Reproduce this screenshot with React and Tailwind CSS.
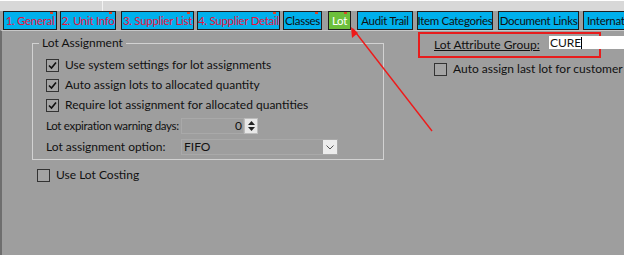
import React from "react";

const font = { fontFamily: 'Lato, "Noto Sans", sans-serif' };

function Tab({ label, cls, active, numbered, marker }) {
  return (
    <div
      className={`relative h-[19px] shrink-0 border border-[#1e1e1e] flex items-center justify-center text-[11.5px] tracking-[-0.3px] leading-none whitespace-nowrap overflow-hidden ${cls} ${
        active
          ? "bg-[#6cbf3c] text-white"
          : numbered
          ? "bg-[#00b0ec] text-[#e8123c]"
          : "bg-[#00b0ec] text-[#111]"
      }`}
    >
      {label}
      {marker && (
        <span className="absolute top-[-1px] right-[3px] w-[3px] h-[3px] bg-[#d9472a]" />
      )}
    </div>
  );
}

function Check({ checked, children, cls = "" }) {
  return (
    <div className={`flex items-center h-[20px] ${cls}`}>
      <span className="w-[13px] h-[13px] shrink-0 border border-[#333] bg-[#a4a4a4] flex items-center justify-center">
        {checked && (
          <svg width="9" height="9" viewBox="0 0 9 9">
            <path d="M1 4.5 L3.5 7 L8 1.5" fill="none" stroke="#111" strokeWidth="1.6" />
          </svg>
        )}
      </span>
      <span className="ml-[6px] text-[12px] text-[#111] whitespace-nowrap">{children}</span>
    </div>
  );
}

export default function App() {
  return (
    <div className="relative w-[624px] h-[255px] bg-[#9e9e9e] overflow-hidden" style={font}>
      {/* top strip */}
      <div className="h-[11px] bg-[#d8d8d8] border-t border-white flex">
        <div className="w-[103px] border-r border-[#f2f2f2]" />
      </div>

      {/* tabs */}
      <div className="flex h-[19px]">
        <Tab label="1. General" cls="ml-[3px] w-[54px]" numbered marker />
        <Tab label="2. Unit Info" cls="ml-[3px] w-[56px]" numbered marker />
        <Tab label="3. Supplier List" cls="ml-[5px] w-[73px]" numbered marker />
        <Tab label="4. Supplier Detail" cls="ml-[3px] w-[83px]" numbered marker />
        <Tab label="Classes" cls="ml-[3px] w-[39px]" marker />
        <Tab label="Lot" cls="ml-[6px] w-[23px]" active marker />
        <Tab label="Audit Trail" cls="ml-[6px] w-[56px]" />
        <Tab label="Item Categories" cls="ml-[4px] w-[76px]" />
        <Tab label="Document Links" cls="ml-[5px] w-[81px]" />
        <Tab label="International" cls="ml-[4px] w-[70px] justify-start pl-[3px]" />
      </div>

      {/* panel */}
      <div className="h-[225px] border-t border-[#c8c8c8] border-l-2 border-l-[#6e6e6e] flex">
        <div className="pl-[30px] pt-[12px] shrink-0">
          <div className="relative w-[352px] h-[117px] border border-[#d2d2d2] pt-[11px] pl-[13px]">
            <span className="absolute top-[-9px] left-[6px] px-[3px] bg-[#9e9e9e] text-[12px] text-[#111] leading-[16px]">
              Lot Assignment
            </span>
            <Check checked>Use system settings for lot assignments</Check>
            <Check checked>Auto assign lots to allocated quantity</Check>
            <Check checked>Require lot assignment for allocated quantities</Check>
            <div className="flex items-center h-[20px] mt-[1px]">
              <span className="w-[135px] shrink-0 text-[11.5px] tracking-[-0.3px] text-[#111] whitespace-nowrap">Lot expiration warning days:</span>
              <div className="w-[63px] h-[16px] border border-[#a9a9a9] bg-[#9e9e9e] flex items-center justify-end pr-[1px] text-[12px] text-[#111]">
                0
              </div>
              <div className="w-[14px] h-[16px] bg-[#e8e8e8] border border-[#bdbdbd] flex flex-col items-center justify-center gap-[2px]">
                <svg width="7" height="4" viewBox="0 0 7 4"><path d="M0 4 L3.5 0 L7 4Z" fill="#222" /></svg>
                <svg width="7" height="4" viewBox="0 0 7 4"><path d="M0 0 L3.5 4 L7 0Z" fill="#222" /></svg>
              </div>
            </div>
            <div className="flex items-center h-[20px] mt-[1px]">
              <span className="w-[135px] shrink-0 text-[12px] text-[#111] whitespace-nowrap">Lot assignment option:</span>
              <div className="w-[157px] h-[16px] border border-[#a9a9a9] flex items-center">
                <span className="flex-1 pl-[2px] text-[12px] text-[#111]">FIFO</span>
                <div className="w-[14px] h-[14px] bg-[#ececec] flex items-center justify-center">
                  <svg width="8" height="5" viewBox="0 0 8 5"><path d="M0.5 0.5 L4 4 L7.5 0.5" fill="none" stroke="#555" strokeWidth="1" /></svg>
                </div>
              </div>
            </div>
          </div>
          <Check cls="mt-[5px] ml-[5px]">Use Lot Costing</Check>
        </div>

        <div className="ml-[34px] pt-[1px] flex-1">
          <div className="w-[183px] h-[26px] border-2 border-[#e81c1c] flex items-center pl-[14px]">
            <span className="text-[12px] text-[#111] underline whitespace-nowrap">Lot Attribute Group:</span>
          </div>
          <Check cls="ml-[16px] mt-[1px]">Auto assign last lot for customer</Check>
        </div>
      </div>

      {/* CURE input */}
      <div className="absolute left-[549px] top-[36px] w-[80px] h-[13px] bg-white flex items-center text-[12px] text-[#111] leading-none pl-[1px]">
        CURE<span className="w-px h-[12px] bg-black" />
      </div>

      {/* arrow */}
      <svg className="absolute left-0 top-0 pointer-events-none" width="624" height="255">
        <line x1="432" y1="131" x2="353" y2="29" stroke="#ee1a1a" strokeWidth="1.4" />
        <path d="M351 27 L352 38 L358 33 Z" fill="#ee1a1a" />
      </svg>
    </div>
  );
}
